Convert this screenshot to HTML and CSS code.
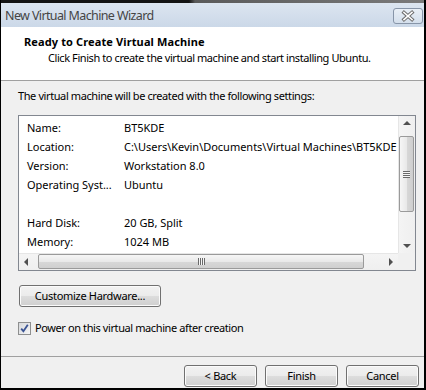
FILE: index.html
```html
<!DOCTYPE html>
<html lang="en">
<head>
<meta charset="utf-8">
<title>New Virtual Machine Wizard</title>
<link rel="stylesheet" href="styles.css">
</head>
<body>
<div class="window">
  <div class="frame-top"></div>
  <div class="titlebar">
    <span class="title">New Virtual Machine Wizard</span>
    <span class="close">
      <svg width="28" height="14" viewBox="0 0 28 14">
        <path d="M10 3.5 L18 10.5 M18 3.5 L10 10.5" stroke="#6d6d6d" stroke-width="3.6" stroke-linecap="square" fill="none"/>
        <path d="M10 3.5 L18 10.5 M18 3.5 L10 10.5" stroke="#ffffff" stroke-width="1.6" stroke-linecap="square" fill="none"/>
      </svg>
    </span>
  </div>
  <div class="header">
    <div class="h-title">Ready to Create Virtual Machine</div>
    <div class="h-sub">Click Finish to create the virtual machine and start installing Ubuntu.</div>
  </div>
  <div class="content">
    <p class="intro">The virtual machine will be created with the following settings:</p>
    <div class="listbox">
      <div class="list-view">
        <div class="row"><span class="k">Name:</span><span class="v">BT5KDE</span></div>
        <div class="row"><span class="k">Location:</span><span class="v">C:\Users\Kevin\Documents\Virtual Machines\BT5KDE</span></div>
        <div class="row"><span class="k">Version:</span><span class="v">Workstation 8.0</span></div>
        <div class="row"><span class="k">Operating Syst...</span><span class="v">Ubuntu</span></div>
        <div class="row"></div>
        <div class="row"><span class="k">Hard Disk:</span><span class="v">20 GB, Split</span></div>
        <div class="row"><span class="k">Memory:</span><span class="v">1024 MB</span></div>
      </div>
      <div class="vscroll">
        <div class="arrow-box"><span class="tri up"></span></div>
        <div class="vtrack"><div class="vthumb"><span class="vgrip"></span></div></div>
        <div class="arrow-box"><span class="tri down"></span></div>
      </div>
      <div class="hscroll">
        <div class="arrow-box"><span class="tri left"></span></div>
        <div class="htrack"><div class="hthumb"><span class="hgrip"></span></div></div>
        <div class="arrow-box"><span class="tri right"></span></div>
      </div>
      <div class="corner"></div>
    </div>
    <button class="btn customize">Customize Hardware...</button>
    <label class="check">
      <span class="box">
        <svg width="11" height="11" viewBox="0 0 11 11">
          <path d="M2.2 5.6 L4.4 8.2 L8.8 1.8" stroke="#3a5393" stroke-width="1.8" fill="none"/>
        </svg>
      </span>
      <span>Power on this virtual machine after creation</span>
    </label>
  </div>
  <div class="footer">
    <button class="btn">&lt; Back</button>
    <button class="btn">Finish</button>
    <button class="btn">Cancel</button>
  </div>
</div>
</body>
</html>
```

FILE: styles.css
```css
html, body {
  margin: 0;
  padding: 0;
  background: #ffffff;
}

body {
  font-family: "Noto Sans", "Open Sans", sans-serif;
  font-size: 11px;
  letter-spacing: -0.35px;
  color: #000;
}

.window {
  width: 426px;
  height: 390px;
  box-sizing: border-box;
  border-left: 1px solid #000;
  border-right: 2px solid #000;
  border-bottom: 2px solid #000;
  display: flex;
  flex-direction: column;
  background: #f0f0f0;
}

.frame-top {
  height: 3px;
  flex: none;
  background: linear-gradient(to right, #141414 0, #141414 188px, #5a5a5a 194px, #7a7a7a 100%);
}

.titlebar {
  height: 24px;
  flex: none;
  display: flex;
  justify-content: space-between;
  align-items: flex-start;
  padding: 0 1px 0 4px;
  background: linear-gradient(#dce5f0, #cbd8e8);
}

.title {
  font-size: 12.5px;
  letter-spacing: -0.62px;
  line-height: 20px;
  margin-top: 3px;
  color: #454545;
}

.close {
  margin-top: 5px;
  width: 28px;
  height: 14px;
  border: 1px solid #8795a8;
  border-radius: 3px;
  background: linear-gradient(#e9eff6, #d4dfec);
  display: flex;
}

.header {
  flex: none;
  box-sizing: border-box;
  background: #fff;
  padding: 7px 0 0 23px;
  border-bottom: 1px solid #a0a0a0;
  height: 54px;
  line-height: 16px;
}

.h-title {
  font-weight: bold;
  letter-spacing: 0.12px;
}

.h-sub {
  padding-left: 24px;
  letter-spacing: -0.42px;
}

.content {
  flex: 1;
  padding: 7px 0 0 17px;
  display: flex;
  flex-direction: column;
  align-items: flex-start;
}

.intro {
  margin: 0;
  line-height: 16px;
  letter-spacing: -0.4px;
}

.listbox {
  margin-top: 11px;
  width: 398px;
  height: 156px;
  box-sizing: border-box;
  border: 1px solid #828790;
  background: #fff;
  display: grid;
  grid-template-columns: 1fr 17px;
  grid-template-rows: 1fr 17px;
}

.list-view {
  overflow: hidden;
  padding-top: 2px;
  min-width: 0;
}

.row {
  height: 19px;
  line-height: 19px;
  display: grid;
  grid-template-columns: 97px auto;
  padding-left: 8px;
  white-space: nowrap;
  letter-spacing: -0.02px;
}

.vscroll {
  display: flex;
  flex-direction: column;
  background: linear-gradient(to right, #e6e6e6 0, #e6e6e6 1px, #f4f4f4 1px, #efefef 100%);
}

.hscroll {
  display: flex;
  background: linear-gradient(#e6e6e6 0, #e6e6e6 1px, #f4f4f4 1px, #efefef 100%);
}

.corner {
  background: #f0f0f0;
}

.arrow-box {
  width: 17px;
  height: 17px;
  flex: none;
  display: flex;
  align-items: center;
  justify-content: center;
}

.tri {
  width: 0;
  height: 0;
}

.tri.up {
  border-left: 4px solid transparent;
  border-right: 4px solid transparent;
  border-bottom: 4px solid #505050;
  margin-top: -4px;
}

.tri.down {
  border-left: 4px solid transparent;
  border-right: 4px solid transparent;
  border-top: 4px solid #505050;
  margin-top: 2px;
}

.tri.left {
  border-top: 4px solid transparent;
  border-bottom: 4px solid transparent;
  border-right: 4px solid #505050;
  margin-left: -4px;
}

.tri.right {
  border-top: 4px solid transparent;
  border-bottom: 4px solid transparent;
  border-left: 4px solid #505050;
  margin-left: 2px;
}

.vtrack {
  flex: 1;
  padding: 3px 1px 0 1px;
}

.vthumb {
  height: 76px;
  box-sizing: border-box;
  border: 1px solid #9a9a9a;
  border-radius: 2px;
  background: linear-gradient(to right, #f6f6f6, #e9e9e9 50%, #d8d8d8 51%, #cfcfcf);
  display: flex;
  align-items: center;
  justify-content: center;
}

.vgrip {
  width: 7px;
  height: 7px;
  background: repeating-linear-gradient(to bottom, #6a6a6a 0 1px, #f6f6f6 1px 2px);
}

.htrack {
  flex: 1;
  padding: 1px 0 0 2px;
  display: flex;
  align-items: flex-start;
}

.hthumb {
  width: 326px;
  height: 15px;
  box-sizing: border-box;
  border: 1px solid #9a9a9a;
  border-radius: 2px;
  background: linear-gradient(#f6f6f6, #e9e9e9 50%, #d8d8d8 51%, #cfcfcf);
  display: flex;
  align-items: center;
  justify-content: center;
}

.hgrip {
  width: 7px;
  height: 7px;
  background: repeating-linear-gradient(to right, #6a6a6a 0 1px, #f6f6f6 1px 2px);
}

.btn {
  font-family: inherit;
  font-size: 11px;
  letter-spacing: -0.3px;
  color: #000;
  height: 22px;
  width: 73px;
  padding: 0;
  border: 1px solid #707070;
  border-radius: 3px;
  background: linear-gradient(#f2f2f2 0%, #ebebeb 50%, #dddddd 51%, #cfcfcf 100%);
  box-shadow: inset 0 0 0 1px #fbfbfb;
  line-height: 18px;
}

.customize {
  margin: 14px 0 0 1px;
  width: 142px;
}

.check {
  margin-top: 13px;
  display: flex;
  align-items: center;
  gap: 4px;
  line-height: 16px;
  letter-spacing: -0.4px;
}

.box {
  width: 13px;
  height: 13px;
  box-sizing: border-box;
  border: 1px solid #8e8f8f;
  background: linear-gradient(135deg, #d6d8db, #f6f6f6);
  display: flex;
  align-items: center;
  justify-content: center;
}

.footer {
  flex: none;
  height: 32px;
  box-sizing: border-box;
  border-top: 1px solid #a0a0a0;
  padding: 8px 5px 0 0;
  display: flex;
  justify-content: flex-end;
  align-items: flex-start;
  gap: 8px;
}
```
